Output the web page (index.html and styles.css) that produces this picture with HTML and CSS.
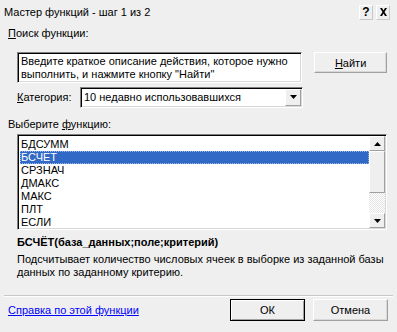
FILE: index.html
```html
<!DOCTYPE html>
<html lang="ru">
<head>
    <meta charset="UTF-8">
    <title>Мастер функций - шаг 1 из 2</title>
    <link rel="stylesheet" href="styles.css">
</head>
<body>
    <div class="dialog">
        <!-- Заголовок окна -->
        <div class="titlebar">
            <span class="title">Мастер функций - шаг 1 из 2</span>
            <div class="title-buttons">
                <span class="tbtn help">?</span>
                <span class="tbtn close">
                    <svg width="9" height="8" viewBox="0 0 9 8"><path d="M1 0h2l1.5 2.5L6 0h2L5.5 4 8 8H6L4.5 5.5 3 8H1l2.5-4z" fill="#000"/></svg>
                </span>
            </div>
        </div>

        <div class="content">
            <div class="label"><u>П</u>оиск функции:</div>
            <div class="search-row">
                <div class="search-box">Введите краткое описание действия, которое нужно выполнить, и нажмите кнопку "Найти"</div>
                <button class="btn btn-find"><u>Н</u>айти</button>
            </div>

            <div class="category-row">
                <span class="cat-label"><u>К</u>атегория:</span>
                <div class="combo">
                    <span class="combo-text">10 недавно использовавшихся</span>
                    <span class="combo-arrow">
                        <svg width="7" height="4" viewBox="0 0 7 4"><path d="M0 0h7L3.5 4z" fill="#000"/></svg>
                    </span>
                </div>
            </div>

            <div class="label label-list">Выберите <u>ф</u>ункцию:</div>
            <div class="listbox">
                <ul class="items">
                    <li>БДСУММ</li>
                    <li class="selected">БСЧЕТ</li>
                    <li>СРЗНАЧ</li>
                    <li>ДМАКС</li>
                    <li>МАКС</li>
                    <li>ПЛТ</li>
                    <li>ЕСЛИ</li>
                </ul>
                <div class="scrollbar">
                    <div class="sbtn">
                        <svg width="7" height="4" viewBox="0 0 7 4"><path d="M3.5 0L7 4H0z" fill="#000"/></svg>
                    </div>
                    <div class="thumb"></div>
                    <div class="track"></div>
                    <div class="sbtn">
                        <svg width="7" height="4" viewBox="0 0 7 4"><path d="M0 0h7L3.5 4z" fill="#000"/></svg>
                    </div>
                </div>
            </div>

            <div class="func-sig">БСЧЁТ(база_данных;поле;критерий)</div>
            <div class="func-desc">Подсчитывает количество числовых ячеек в выборке из заданной базы данных по заданному критерию.</div>
        </div>

        <div class="separator"></div>

        <div class="footer">
            <a href="#" class="help-link">Справка по этой функции</a>
            <div class="footer-buttons">
                <button class="btn btn-default">ОК</button>
                <button class="btn">Отмена</button>
            </div>
        </div>
    </div>
</body>
</html>
```

FILE: styles.css
```css
* {
    margin: 0;
    padding: 0;
    box-sizing: border-box;
}

body {
    background-color: #efefef;
    font-family: 'Liberation Sans', Arial, sans-serif;
    font-size: 11px;
    color: #000;
    width: 397px;
    height: 332px;
    overflow: hidden;
}

u {
    text-decoration: underline;
}

/* Заголовок */
.titlebar {
    height: 24px;
    display: flex;
    align-items: center;
    justify-content: space-between;
    padding: 0 7px 0 4px;
}

.title {
    font-size: 11px;
}

.title-buttons {
    display: flex;
    gap: 3px;
}

.tbtn {
    width: 14px;
    height: 15px;
    display: flex;
    align-items: center;
    justify-content: center;
    font-weight: bold;
    font-size: 12px;
    border-top: 1px solid #fff;
    border-left: 1px solid #fff;
    border-right: 1px solid #c8c8c8;
    border-bottom: 1px solid #c8c8c8;
}

.content {
    padding: 3px 10px 0 17px;
}

.label {
    margin-left: -9px;
    height: 13px;
    line-height: 13px;
    margin-bottom: 12px;
}

.search-row {
    display: flex;
    align-items: flex-start;
    gap: 12px;
}

.search-box {
    width: 286px;
    height: 31px;
    background: #fff;
    padding: 2px 3px;
    line-height: 13px;
    border-top: 1px solid #808080;
    border-left: 1px solid #808080;
    border-right: 1px solid #fff;
    border-bottom: 1px solid #fff;
    box-shadow: inset 1px 1px 0 #000, inset -1px -1px 0 #d8d8d8;
}

.btn {
    font-family: 'Liberation Sans', Arial, sans-serif;
    font-size: 11px;
    color: #000;
    background: #efefef;
    width: 73px;
    height: 21px;
    border-top: 1px solid #fff;
    border-left: 1px solid #fff;
    border-right: 1px solid #a0a0a0;
    border-bottom: 1px solid #a0a0a0;
    box-shadow: inset -1px -1px 0 #d8d8d8;
}

.category-row {
    display: flex;
    align-items: center;
    margin-top: 4px;
    height: 20px;
}

.cat-label {
    width: 63px;
}

.combo {
    width: 223px;
    height: 21px;
    display: flex;
    align-items: center;
    justify-content: space-between;
    background: #fff;
    padding-left: 3px;
    border-top: 1px solid #808080;
    border-left: 1px solid #808080;
    border-right: 1px solid #fff;
    border-bottom: 1px solid #fff;
    box-shadow: inset 1px 1px 0 #000, inset -1px -1px 0 #d8d8d8;
}

.combo-arrow {
    width: 16px;
    height: 17px;
    margin-right: 1px;
    display: flex;
    align-items: center;
    justify-content: center;
    background: #efefef;
    border-top: 1px solid #fff;
    border-left: 1px solid #fff;
    border-right: 1px solid #a0a0a0;
    border-bottom: 1px solid #a0a0a0;
}

.label-list {
    margin-top: 11px;
    margin-bottom: 3px;
}

.listbox {
    width: 370px;
    height: 96px;
    display: flex;
    background: #fff;
    padding: 2px;
    border-top: 1px solid #808080;
    border-left: 1px solid #808080;
    border-right: 1px solid #fff;
    border-bottom: 1px solid #fff;
    box-shadow: inset 1px 1px 0 #000, inset -1px -1px 0 #d8d8d8;
}

.items {
    list-style: none;
    flex: 1;
    padding-top: 1px;
}

.items li {
    height: 13px;
    line-height: 13px;
    padding-left: 1px;
}

.items li.selected {
    background: #3169c6;
    color: #fff;
    outline: 1px dotted #9fb8e0;
    outline-offset: -1px;
}

.scrollbar {
    width: 16px;
    display: flex;
    flex-direction: column;
    margin: -1px -1px -1px 0;
}

.sbtn {
    height: 15px;
    display: flex;
    align-items: center;
    justify-content: center;
    background: #efefef;
    border-top: 1px solid #fff;
    border-left: 1px solid #fff;
    border-right: 1px solid #a0a0a0;
    border-bottom: 1px solid #a0a0a0;
}

.thumb {
    height: 42px;
    background: #efefef;
    border-top: 1px solid #fff;
    border-left: 1px solid #fff;
    border-right: 1px solid #a0a0a0;
    border-bottom: 1px solid #a0a0a0;
}

.track {
    flex: 1;
    background-color: #f4f4f4;
    background-image: repeating-conic-gradient(#fff 0 25%, #e4e4e4 0 50%);
    background-size: 2px 2px;
}

.func-sig {
    font-weight: bold;
    margin-top: 6px;
    line-height: 13px;
}

.func-desc {
    margin-top: 4px;
    line-height: 13px;
    width: 375px;
}

.separator {
    margin: 16px 4px 0 4px;
    border-top: 1px solid #c8c8c8;
    border-bottom: 1px solid #fff;
}

.footer {
    display: flex;
    align-items: center;
    justify-content: space-between;
    padding: 2px 9px 0 8px;
}

.help-link {
    color: #0000ff;
    text-decoration: underline;
}

.footer-buttons {
    display: flex;
    gap: 8px;
}

.footer-buttons .btn {
    width: 75px;
    height: 22px;
}

.btn-default {
    border: 1px solid #000;
    box-shadow: inset 1px 1px 0 #fff, inset -1px -1px 0 #a0a0a0;
}
```
